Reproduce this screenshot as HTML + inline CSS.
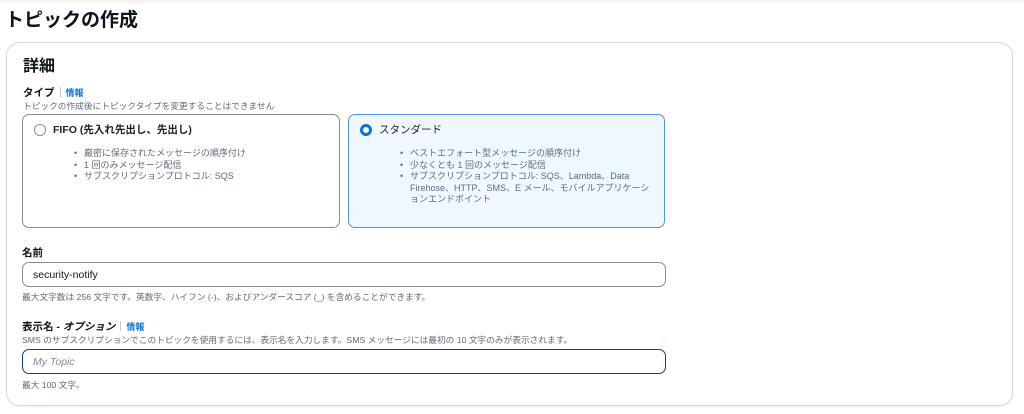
<!DOCTYPE html>
<html><head><meta charset="utf-8"><style>
*{box-sizing:border-box;margin:0;padding:0}
body{width:1024px;height:414px;background:#fff;font-family:"Liberation Sans","Noto Sans CJK JP",sans-serif;color:#0f141a;position:relative;overflow:hidden}
.top{position:absolute;left:0;top:0;width:1024px;height:3px;background:#f3f3f3}
.abs{position:absolute;white-space:nowrap}
h1{position:absolute;left:5px;top:5px;font-size:19px;font-weight:bold}
.panel{position:absolute;left:6px;top:42px;width:1007px;height:364px;border:1px solid #d5d8dc;border-radius:14px;box-shadow:0 1px 2px rgba(0,0,0,.08)}
.lbl{font-size:10.5px;font-weight:bold}
.sm{font-size:8.7px;color:#5f6b7a}
.link{color:#0972d3;font-size:9px;font-weight:bold}
.sep{display:inline-block;width:1px;height:10px;background:#c6c6cd;margin:0 5px;vertical-align:-1px}
.card{position:absolute;top:114px;height:114px;border:1px solid #8c8c94;border-radius:7px}
.card.sel{border-color:#4c94f0;background:#f0f8ff}
.rad{position:absolute;left:11px;top:9px;width:12px;height:12px;border-radius:50%;border:1.5px solid #8c8c94;background:#fff}
.sel .rad{border:3.5px solid #0972d3}
.ct{position:absolute;left:30px;top:7px;font-size:10.5px;font-weight:bold;color:#222}
ul{position:absolute;left:61px;top:33px;font-size:9px;color:#5f6b7a;line-height:11.5px;list-style:none}
li{position:relative}
li:before{content:"•";position:absolute;left:-10px}
.inp{position:absolute;left:22px;width:644px;height:25px;border:1px solid #8c8c94;border-radius:7px;font-size:10.5px;padding:6px 10px}
</style></head><body>
<div class="top"></div>
<h1>トピックの作成</h1>
<div class="panel"></div>
<div class="abs" style="left:23px;top:52px;font-size:16px;font-weight:bold">詳細</div>
<div class="abs" style="left:23px;top:83px"><span class="lbl">タイプ</span><span class="sep"></span><span class="link">情報</span></div>
<div class="abs sm" style="left:23px;top:99px">トピックの作成後にトピックタイプを変更することはできません</div>
<div class="card" style="left:22px;width:318px"><div class="rad"></div><div class="ct">FIFO (先入れ先出し、先出し)</div>
<ul><li>厳密に保存されたメッセージの順序付け</li><li>1 回のみメッセージ配信</li><li>サブスクリプションプロトコル: SQS</li></ul></div>
<div class="card sel" style="left:348px;width:317px"><div class="rad"></div><div class="ct" style="font-weight:normal">スタンダード</div>
<ul style="left:61px;width:245px;white-space:normal"><li>ベストエフォート型メッセージの順序付け</li><li>少なくとも 1 回のメッセージ配信</li><li>サブスクリプションプロトコル: SQS、Lambda、Data Firehose、HTTP、SMS、E メール、モバイルアプリケーションエンドポイント</li></ul></div>
<div class="abs lbl" style="left:22px;top:245px">名前</div>
<div class="inp" style="top:262px;color:#0f141a">security-notify</div>
<div class="abs sm" style="left:22px;top:290px">最大文字数は 256 文字です。英数字、ハイフン (-)、およびアンダースコア (_) を含めることができます。</div>
<div class="abs" style="left:22px;top:317px"><span class="lbl">表示名 - <i>オプション</i></span><span class="sep"></span><span class="link">情報</span></div>
<div class="abs sm" style="left:22px;top:333px">SMS のサブスクリプションでこのトピックを使用するには、表示名を入力します。SMS メッセージには最初の 10 文字のみが表示されます。</div>
<div class="inp" style="top:349px;border:1.5px solid #0f3e8c;color:#7d8998;font-style:italic">My Topic</div>
<div class="abs sm" style="left:22px;top:378px">最大 100 文字。</div>
</body></html>
